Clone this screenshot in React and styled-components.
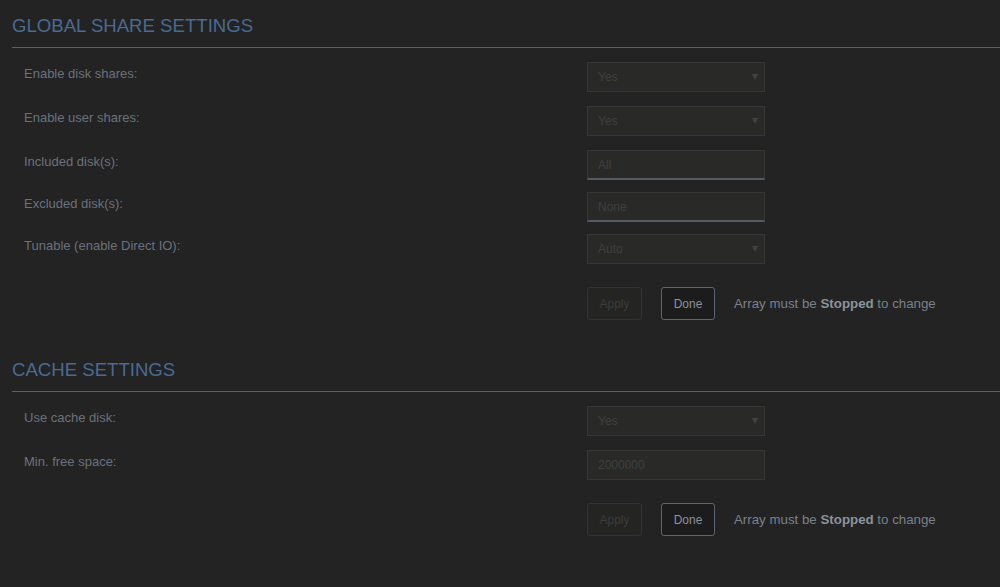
import React from "react";
import styled, { createGlobalStyle } from "styled-components";

const Global = createGlobalStyle`
  html, body {
    margin: 0;
    padding: 0;
    background: #222322;
    font-family: "Liberation Sans", Arial, sans-serif;
  }
`;

const Page = styled.div`
  width: 1000px;
  height: 587px;
  padding-left: 12px;
  box-sizing: border-box;
  background: #222322;
  overflow: hidden;
`;

const Header = styled.div`
  height: 48px;
  padding-top: 16px;
  box-sizing: border-box;
  border-bottom: 1px solid #59616c;
  margin-top: ${(p) => p.$top || 0}px;
  h2 {
    margin: 0;
    font-size: 18.6px;
    line-height: 20px;
    font-weight: normal;
    color: #4b6a92;
  }
`;

const Form = styled.div`
  display: flex;
  flex-direction: column;
  padding-top: 14px;
`;

const Row = styled.div`
  display: grid;
  grid-template-columns: 563px 178px 1fr;
  padding-left: 12px;
  margin-bottom: ${(p) => p.$gap}px;
  label {
    font-size: 13px;
    line-height: 16px;
    padding-top: 4px;
    color: #6b727d;
  }
`;

const Field = styled.div`
  position: relative;
  height: 30px;
  box-sizing: border-box;
  background: #292a28;
  border: 1px solid #363735;
  border-bottom: ${(p) => (p.$text ? "2px solid #515a66" : "1px solid #363735")};
  padding-left: 10px;
  display: flex;
  align-items: center;
  font-size: 12px;
  color: #3f403e;
`;

const Caret = styled.span`
  position: absolute;
  right: 6px;
  top: 50%;
  transform: translateY(-50%);
  width: 0;
  height: 0;
  border-left: 3px solid transparent;
  border-right: 3px solid transparent;
  border-top: 6px solid #414240;
`;

const Actions = styled.div`
  display: flex;
  align-items: center;
  gap: 19px;
  grid-column: 2 / 4;
`;

const Button = styled.button`
  height: 33px;
  box-sizing: border-box;
  border-radius: 3px;
  font-family: inherit;
  font-size: 12px;
  padding: 0;
  width: ${(p) => (p.$primary ? 54 : 55)}px;
  background: ${(p) => (p.$primary ? "#1b1c1b" : "#242523")};
  border: 1px solid ${(p) => (p.$primary ? "#5b6570" : "#333432")};
  color: ${(p) => (p.$primary ? "#8b929c" : "#3b3c3a")};
`;

const Note = styled.span`
  font-size: 13.3px;
  color: #7a818b;
  b {
    color: #8b929c;
  }
`;

const Select = ({ value }) => (
  <Field>
    {value}
    <Caret />
  </Field>
);

const Footer = () => (
  <Row $gap={0}>
    <span />
    <Actions>
      <Button>Apply</Button>
      <Button $primary>Done</Button>
      <Note>
        Array must be <b>Stopped</b> to change
      </Note>
    </Actions>
  </Row>
);

export default function App() {
  return (
    <Page>
      <Global />
      <Header>
        <h2>GLOBAL SHARE SETTINGS</h2>
      </Header>
      <Form>
        <Row $gap={14}>
          <label>Enable disk shares:</label>
          <Select value="Yes" />
        </Row>
        <Row $gap={14}>
          <label>Enable user shares:</label>
          <Select value="Yes" />
        </Row>
        <Row $gap={12}>
          <label>Included disk(s):</label>
          <Field $text>All</Field>
        </Row>
        <Row $gap={12}>
          <label>Excluded disk(s):</label>
          <Field $text>None</Field>
        </Row>
        <Row $gap={23}>
          <label>Tunable (enable Direct IO):</label>
          <Select value="Auto" />
        </Row>
        <Footer />
      </Form>
      <Header $top={24}>
        <h2>CACHE SETTINGS</h2>
      </Header>
      <Form>
        <Row $gap={14}>
          <label>Use cache disk:</label>
          <Select value="Yes" />
        </Row>
        <Row $gap={23}>
          <label>Min. free space:</label>
          <Field>2000000</Field>
        </Row>
        <Footer />
      </Form>
    </Page>
  );
}
